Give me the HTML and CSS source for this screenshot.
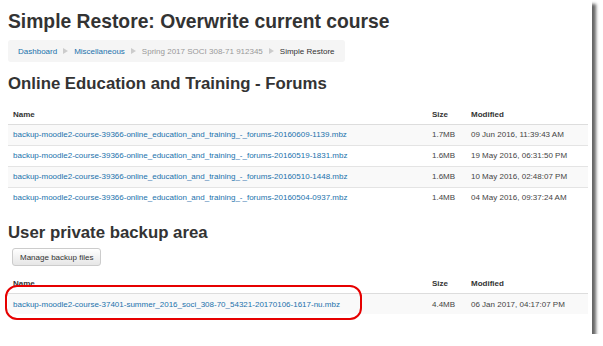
FILE: index.html
```html
<!DOCTYPE html>
<html lang="en">
<head>
  <meta charset="UTF-8" />
  <title>Simple Restore: Overwrite current course</title>
  <link rel="stylesheet" href="styles.css">
</head>
<body>
  <div class="page">
    <h1>Simple Restore: Overwrite current course</h1>

    <!-- Breadcrumb -->
    <nav class="crumbs">
      <a href="#">Dashboard</a>
      <span class="sep"></span>
      <a href="#">Miscellaneous</a>
      <span class="sep"></span>
      <span class="muted">Spring 2017 SOCI 308-71 912345</span>
      <span class="sep"></span>
      <span class="current">Simple Restore</span>
    </nav>

    <h2 class="first">Online Education and Training - Forums</h2>
    <table class="files">
      <thead>
        <tr><th class="c-name">Name</th><th class="c-size">Size</th><th>Modified</th></tr>
      </thead>
      <tbody>
        <tr><td><a href="#">backup-moodle2-course-39366-online_education_and_training_-_forums-20160609-1139.mbz</a></td><td>1.7MB</td><td>09 Jun 2016, 11:39:43 AM</td></tr>
        <tr><td><a href="#">backup-moodle2-course-39366-online_education_and_training_-_forums-20160519-1831.mbz</a></td><td>1.6MB</td><td>19 May 2016, 06:31:50 PM</td></tr>
        <tr><td><a href="#">backup-moodle2-course-39366-online_education_and_training_-_forums-20160510-1448.mbz</a></td><td>1.6MB</td><td>10 May 2016, 02:48:07 PM</td></tr>
        <tr><td><a href="#">backup-moodle2-course-39366-online_education_and_training_-_forums-20160504-0937.mbz</a></td><td>1.4MB</td><td>04 May 2016, 09:37:24 AM</td></tr>
      </tbody>
    </table>

    <h2 class="second">User private backup area</h2>
    <button class="btn" type="button">Manage backup files</button>

    <div class="private">
      <table class="files">
        <thead>
          <tr><th class="c-name">Name</th><th class="c-size">Size</th><th>Modified</th></tr>
        </thead>
        <tbody>
          <tr><td><a href="#">backup-moodle2-course-37401-summer_2016_soci_308-70_54321-20170106-1617-nu.mbz</a></td><td>4.4MB</td><td>06 Jan 2017, 04:17:07 PM</td></tr>
        </tbody>
      </table>
      <!-- red highlight drawn over the row -->
      <div class="highlight"></div>
    </div>
  </div>
</body>
</html>
```

FILE: styles.css
```css
body {
  margin: 0;
  font-family: "Liberation Sans", Arial, sans-serif;
  background: #fff;
  color: #333;
}

/* page screenshot with drop shadow */
.page {
  width: 592px;
  height: 334px;
  box-sizing: border-box;
  padding: 11px 4px 0 8px;
  background: #fff;
  box-shadow: 4px 4px 3px rgba(0, 0, 0, 0.6);
  overflow: hidden;
}

h1 {
  margin: 0;
  font-size: 19.3px;
  line-height: 1.1;
  font-weight: bold;
  color: #333;
}

h2 {
  margin: 0;
  font-size: 16.8px;
  line-height: 1.1;
  font-weight: bold;
  color: #333;
}
h2.first { margin-top: 13px; }
h2.second { margin-top: 16px; }

a {
  color: #2272ac;
  text-decoration: none;
}

/* Breadcrumb */
.crumbs {
  display: inline-flex;
  align-items: center;
  gap: 6px;
  height: 22px;
  margin-top: 8px;
  padding: 0 10px;
  background: #f5f5f5;
  border-radius: 3px;
  font-size: 8px;
}
.crumbs .muted { color: #999; }
.crumbs .current { color: #333; }
.crumbs .sep {
  display: inline-block;
  width: 0;
  height: 0;
  border-left: 5px solid #ccc;
  border-top: 3px solid transparent;
  border-bottom: 3px solid transparent;
}

/* Tables */
.files {
  width: 580px;
  border-collapse: collapse;
  font-size: 8px;
  margin-top: 11px;
}
.files th {
  height: 19px;
  padding: 0 5px;
  text-align: left;
  font-weight: bold;
  color: #333;
  border-bottom: 1px solid #ddd;
}
.files td {
  height: 20px;
  padding: 0 5px;
  color: #444;
  border-bottom: 1px solid #e4e4e4;
  white-space: nowrap;
}
.files tbody tr:nth-child(odd) td { background: #f9f9f9; }
.files tbody tr:last-child td { border-bottom: none; }
.files .c-name { width: 409px; }
.files .c-size { width: 29px; }

.btn {
  display: block;
  margin: 6px 0 0 4px;
  height: 18px;
  padding: 0 7px;
  font-family: inherit;
  font-size: 8px;
  color: #333;
  background: linear-gradient(#fff, #e6e6e6);
  border: 1px solid #ccc;
  border-radius: 3px;
}

.private {
  position: relative;
  padding-top: 8px;
}
.private .files { margin-top: 0; }

.highlight {
  position: absolute;
  top: 19px;
  left: -3px;
  width: 357px;
  height: 35px;
  box-sizing: border-box;
  border: 2px solid #e60000;
  border-radius: 12px;
}
```
